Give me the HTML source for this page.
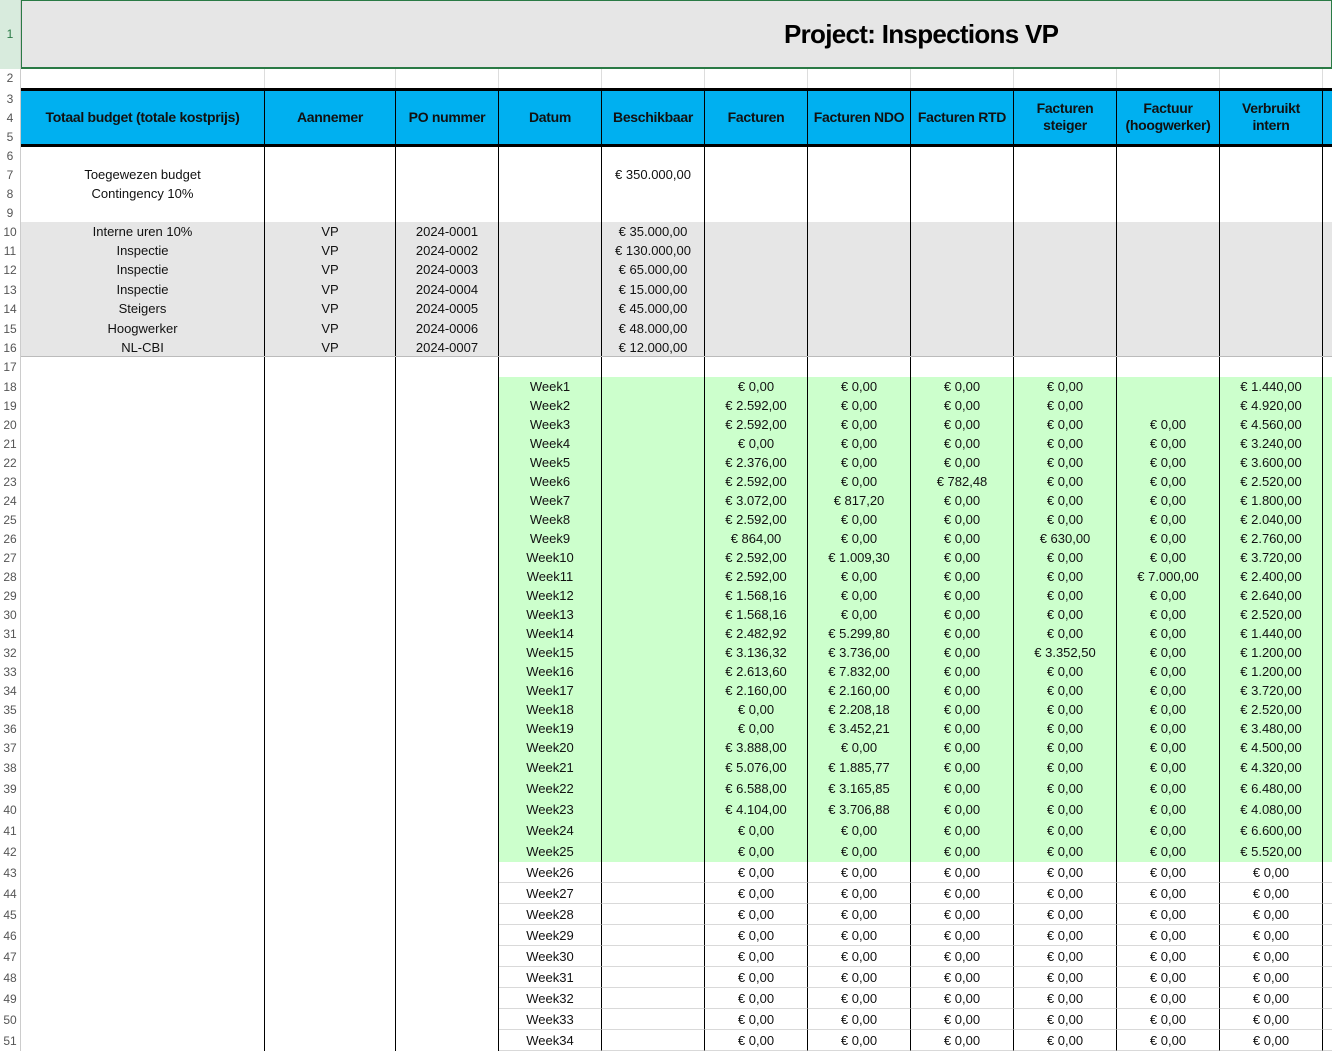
<!DOCTYPE html>
<html><head><meta charset="utf-8"><style>
*{margin:0;padding:0;box-sizing:border-box}
body{width:1332px;height:1051px;overflow:hidden;background:#fff;font-family:"Liberation Sans",Arial,sans-serif;color:#111;position:relative}
#rn{position:absolute;left:0;top:0;width:21px;height:1051px;border-right:1px solid #ccc;background:#fff}
#rn div{position:absolute;left:0;width:20px;text-align:center;font-size:12px;color:#555}
#main{position:absolute;left:21px;top:0;width:1311px}
.r{display:flex;height:19px}
.c{border-right:1px solid #000;text-align:center;font-size:13px;line-height:19px;white-space:nowrap;overflow:hidden;flex:none}
.c:nth-child(1){width:244px}.c:nth-child(2){width:131px}
.c:nth-child(n+3){width:103px}.c:nth-child(12){width:9px;border-right:none}
.g .c:nth-child(n+4){background:#ccffcc}
.w .c:nth-child(n+4){border-bottom:1px solid #d9d9d9}
.gr .c{background:#e6e6e6}
.h21{height:21px}.h21 .c{line-height:21px}
.hd .c{font-weight:bold;font-size:14px;letter-spacing:-0.3px}
</style></head><body>
<div id="rn">
<div style="top:0;height:69px;line-height:69px;background:#d8ebdd;color:#2a7a45">1</div>
<div style="top:69px;line-height:19px">2</div>
<div style="top:90px;line-height:19px">3</div>
<div style="top:109px;line-height:19px">4</div>
<div style="top:128px;line-height:19px">5</div>
<div style="top:147px;line-height:19px">6</div>
<div style="top:166px;line-height:19px">7</div>
<div style="top:185px;line-height:19px">8</div>
<div style="top:204px;line-height:19px">9</div>
<div style="top:223px;line-height:19px">10</div>
<div style="top:242px;line-height:19px">11</div>
<div style="top:261px;line-height:19px">12</div>
<div style="top:281px;line-height:19px">13</div>
<div style="top:300px;line-height:19px">14</div>
<div style="top:320px;line-height:19px">15</div>
<div style="top:339px;line-height:19px">16</div>
<div style="top:358px;line-height:19px">17</div>
<div style="top:378px;line-height:19px">18</div><div style="top:397px;line-height:19px">19</div><div style="top:416px;line-height:19px">20</div><div style="top:435px;line-height:19px">21</div><div style="top:454px;line-height:19px">22</div><div style="top:473px;line-height:19px">23</div><div style="top:492px;line-height:19px">24</div><div style="top:511px;line-height:19px">25</div><div style="top:530px;line-height:19px">26</div><div style="top:549px;line-height:19px">27</div><div style="top:568px;line-height:19px">28</div><div style="top:587px;line-height:19px">29</div><div style="top:606px;line-height:19px">30</div><div style="top:625px;line-height:19px">31</div><div style="top:644px;line-height:19px">32</div><div style="top:663px;line-height:19px">33</div><div style="top:682px;line-height:19px">34</div><div style="top:701px;line-height:19px">35</div><div style="top:720px;line-height:19px">36</div><div style="top:739px;line-height:19px">37</div>
<div style="top:758px;line-height:21px">38</div><div style="top:779px;line-height:21px">39</div><div style="top:800px;line-height:21px">40</div><div style="top:821px;line-height:21px">41</div><div style="top:842px;line-height:21px">42</div><div style="top:863px;line-height:21px">43</div><div style="top:884px;line-height:21px">44</div><div style="top:905px;line-height:21px">45</div><div style="top:926px;line-height:21px">46</div><div style="top:947px;line-height:21px">47</div><div style="top:968px;line-height:21px">48</div><div style="top:989px;line-height:21px">49</div><div style="top:1010px;line-height:21px">50</div><div style="top:1031px;line-height:21px">51</div>
</div>
<div id="main">
<div style="height:69px;background:#e6e6e6;border:1px solid #2a7a45;border-bottom:2px solid #2a7a45;position:relative">
<div style="position:absolute;left:762px;top:18px;font-size:26px;font-weight:bold;color:#000;letter-spacing:-0.7px">Project: Inspections VP</div></div>
<div class="r" style="height:19px"><div class="c" style="border-color:#ddd"></div><div class="c" style="border-color:#ddd"></div><div class="c" style="border-color:#ddd"></div><div class="c" style="border-color:#ddd"></div><div class="c" style="border-color:#ddd"></div><div class="c" style="border-color:#ddd"></div><div class="c" style="border-color:#ddd"></div><div class="c" style="border-color:#ddd"></div><div class="c" style="border-color:#ddd"></div><div class="c" style="border-color:#ddd"></div><div class="c" style="border-color:#ddd"></div><div class="c"></div></div>
<div class="r hd" style="height:59px;background:#00b0f0;border-top:3px solid #000;border-bottom:3px solid #000">
<div class="c" style="line-height:53px">Totaal budget (totale kostprijs)</div>
<div class="c" style="line-height:53px">Aannemer</div>
<div class="c" style="line-height:53px">PO nummer</div>
<div class="c" style="line-height:53px">Datum</div>
<div class="c" style="line-height:53px">Beschikbaar</div>
<div class="c" style="line-height:53px">Facturen</div>
<div class="c" style="line-height:53px">Facturen NDO</div>
<div class="c" style="line-height:53px">Facturen RTD</div>
<div class="c" style="line-height:17px;padding-top:9px">Facturen<br>steiger</div>
<div class="c" style="line-height:17px;padding-top:9px">Factuur<br>(hoogwerker)</div>
<div class="c" style="line-height:17px;padding-top:9px">Verbruikt<br>intern</div>
<div class="c"></div></div>
<div class="r" style="height:75px">
<div class="c" style="line-height:19px;padding-top:18px">Toegewezen budget<br>Contingency 10%</div>
<div class="c"></div><div class="c"></div><div class="c"></div>
<div class="c" style="padding-top:18px">€ 350.000,00</div>
<div class="c"></div><div class="c"></div><div class="c"></div><div class="c"></div><div class="c"></div><div class="c"></div><div class="c"></div></div>
<div class="r gr"><div class="c">Interne uren 10%</div><div class="c">VP</div><div class="c">2024-0001</div><div class="c"></div><div class="c">€ 35.000,00</div><div class="c"></div><div class="c"></div><div class="c"></div><div class="c"></div><div class="c"></div><div class="c"></div><div class="c"></div></div>
<div class="r gr"><div class="c">Inspectie</div><div class="c">VP</div><div class="c">2024-0002</div><div class="c"></div><div class="c">€ 130.000,00</div><div class="c"></div><div class="c"></div><div class="c"></div><div class="c"></div><div class="c"></div><div class="c"></div><div class="c"></div></div>
<div class="r gr" style="height:20px"><div class="c">Inspectie</div><div class="c">VP</div><div class="c">2024-0003</div><div class="c"></div><div class="c">€ 65.000,00</div><div class="c"></div><div class="c"></div><div class="c"></div><div class="c"></div><div class="c"></div><div class="c"></div><div class="c"></div></div>
<div class="r gr"><div class="c">Inspectie</div><div class="c">VP</div><div class="c">2024-0004</div><div class="c"></div><div class="c">€ 15.000,00</div><div class="c"></div><div class="c"></div><div class="c"></div><div class="c"></div><div class="c"></div><div class="c"></div><div class="c"></div></div>
<div class="r gr" style="height:20px"><div class="c">Steigers</div><div class="c">VP</div><div class="c">2024-0005</div><div class="c"></div><div class="c">€ 45.000,00</div><div class="c"></div><div class="c"></div><div class="c"></div><div class="c"></div><div class="c"></div><div class="c"></div><div class="c"></div></div>
<div class="r gr"><div class="c">Hoogwerker</div><div class="c">VP</div><div class="c">2024-0006</div><div class="c"></div><div class="c">€ 48.000,00</div><div class="c"></div><div class="c"></div><div class="c"></div><div class="c"></div><div class="c"></div><div class="c"></div><div class="c"></div></div>
<div class="r gr" style="border-bottom:1px solid #bbb"><div class="c">NL-CBI</div><div class="c">VP</div><div class="c">2024-0007</div><div class="c"></div><div class="c">€ 12.000,00</div><div class="c"></div><div class="c"></div><div class="c"></div><div class="c"></div><div class="c"></div><div class="c"></div><div class="c"></div></div>
<div class="r" style="height:20px"><div class="c"></div><div class="c"></div><div class="c"></div><div class="c"></div><div class="c"></div><div class="c"></div><div class="c"></div><div class="c"></div><div class="c"></div><div class="c"></div><div class="c"></div><div class="c"></div></div>
<div class="r g"><div class="c"></div><div class="c"></div><div class="c"></div><div class="c">Week1</div><div class="c"></div><div class="c">€ 0,00</div><div class="c">€ 0,00</div><div class="c">€ 0,00</div><div class="c">€ 0,00</div><div class="c"></div><div class="c">€ 1.440,00</div><div class="c"></div></div>
<div class="r g"><div class="c"></div><div class="c"></div><div class="c"></div><div class="c">Week2</div><div class="c"></div><div class="c">€ 2.592,00</div><div class="c">€ 0,00</div><div class="c">€ 0,00</div><div class="c">€ 0,00</div><div class="c"></div><div class="c">€ 4.920,00</div><div class="c"></div></div>
<div class="r g"><div class="c"></div><div class="c"></div><div class="c"></div><div class="c">Week3</div><div class="c"></div><div class="c">€ 2.592,00</div><div class="c">€ 0,00</div><div class="c">€ 0,00</div><div class="c">€ 0,00</div><div class="c">€ 0,00</div><div class="c">€ 4.560,00</div><div class="c"></div></div>
<div class="r g"><div class="c"></div><div class="c"></div><div class="c"></div><div class="c">Week4</div><div class="c"></div><div class="c">€ 0,00</div><div class="c">€ 0,00</div><div class="c">€ 0,00</div><div class="c">€ 0,00</div><div class="c">€ 0,00</div><div class="c">€ 3.240,00</div><div class="c"></div></div>
<div class="r g"><div class="c"></div><div class="c"></div><div class="c"></div><div class="c">Week5</div><div class="c"></div><div class="c">€ 2.376,00</div><div class="c">€ 0,00</div><div class="c">€ 0,00</div><div class="c">€ 0,00</div><div class="c">€ 0,00</div><div class="c">€ 3.600,00</div><div class="c"></div></div>
<div class="r g"><div class="c"></div><div class="c"></div><div class="c"></div><div class="c">Week6</div><div class="c"></div><div class="c">€ 2.592,00</div><div class="c">€ 0,00</div><div class="c">€ 782,48</div><div class="c">€ 0,00</div><div class="c">€ 0,00</div><div class="c">€ 2.520,00</div><div class="c"></div></div>
<div class="r g"><div class="c"></div><div class="c"></div><div class="c"></div><div class="c">Week7</div><div class="c"></div><div class="c">€ 3.072,00</div><div class="c">€ 817,20</div><div class="c">€ 0,00</div><div class="c">€ 0,00</div><div class="c">€ 0,00</div><div class="c">€ 1.800,00</div><div class="c"></div></div>
<div class="r g"><div class="c"></div><div class="c"></div><div class="c"></div><div class="c">Week8</div><div class="c"></div><div class="c">€ 2.592,00</div><div class="c">€ 0,00</div><div class="c">€ 0,00</div><div class="c">€ 0,00</div><div class="c">€ 0,00</div><div class="c">€ 2.040,00</div><div class="c"></div></div>
<div class="r g"><div class="c"></div><div class="c"></div><div class="c"></div><div class="c">Week9</div><div class="c"></div><div class="c">€ 864,00</div><div class="c">€ 0,00</div><div class="c">€ 0,00</div><div class="c">€ 630,00</div><div class="c">€ 0,00</div><div class="c">€ 2.760,00</div><div class="c"></div></div>
<div class="r g"><div class="c"></div><div class="c"></div><div class="c"></div><div class="c">Week10</div><div class="c"></div><div class="c">€ 2.592,00</div><div class="c">€ 1.009,30</div><div class="c">€ 0,00</div><div class="c">€ 0,00</div><div class="c">€ 0,00</div><div class="c">€ 3.720,00</div><div class="c"></div></div>
<div class="r g"><div class="c"></div><div class="c"></div><div class="c"></div><div class="c">Week11</div><div class="c"></div><div class="c">€ 2.592,00</div><div class="c">€ 0,00</div><div class="c">€ 0,00</div><div class="c">€ 0,00</div><div class="c">€ 7.000,00</div><div class="c">€ 2.400,00</div><div class="c"></div></div>
<div class="r g"><div class="c"></div><div class="c"></div><div class="c"></div><div class="c">Week12</div><div class="c"></div><div class="c">€ 1.568,16</div><div class="c">€ 0,00</div><div class="c">€ 0,00</div><div class="c">€ 0,00</div><div class="c">€ 0,00</div><div class="c">€ 2.640,00</div><div class="c"></div></div>
<div class="r g"><div class="c"></div><div class="c"></div><div class="c"></div><div class="c">Week13</div><div class="c"></div><div class="c">€ 1.568,16</div><div class="c">€ 0,00</div><div class="c">€ 0,00</div><div class="c">€ 0,00</div><div class="c">€ 0,00</div><div class="c">€ 2.520,00</div><div class="c"></div></div>
<div class="r g"><div class="c"></div><div class="c"></div><div class="c"></div><div class="c">Week14</div><div class="c"></div><div class="c">€ 2.482,92</div><div class="c">€ 5.299,80</div><div class="c">€ 0,00</div><div class="c">€ 0,00</div><div class="c">€ 0,00</div><div class="c">€ 1.440,00</div><div class="c"></div></div>
<div class="r g"><div class="c"></div><div class="c"></div><div class="c"></div><div class="c">Week15</div><div class="c"></div><div class="c">€ 3.136,32</div><div class="c">€ 3.736,00</div><div class="c">€ 0,00</div><div class="c">€ 3.352,50</div><div class="c">€ 0,00</div><div class="c">€ 1.200,00</div><div class="c"></div></div>
<div class="r g"><div class="c"></div><div class="c"></div><div class="c"></div><div class="c">Week16</div><div class="c"></div><div class="c">€ 2.613,60</div><div class="c">€ 7.832,00</div><div class="c">€ 0,00</div><div class="c">€ 0,00</div><div class="c">€ 0,00</div><div class="c">€ 1.200,00</div><div class="c"></div></div>
<div class="r g"><div class="c"></div><div class="c"></div><div class="c"></div><div class="c">Week17</div><div class="c"></div><div class="c">€ 2.160,00</div><div class="c">€ 2.160,00</div><div class="c">€ 0,00</div><div class="c">€ 0,00</div><div class="c">€ 0,00</div><div class="c">€ 3.720,00</div><div class="c"></div></div>
<div class="r g"><div class="c"></div><div class="c"></div><div class="c"></div><div class="c">Week18</div><div class="c"></div><div class="c">€ 0,00</div><div class="c">€ 2.208,18</div><div class="c">€ 0,00</div><div class="c">€ 0,00</div><div class="c">€ 0,00</div><div class="c">€ 2.520,00</div><div class="c"></div></div>
<div class="r g"><div class="c"></div><div class="c"></div><div class="c"></div><div class="c">Week19</div><div class="c"></div><div class="c">€ 0,00</div><div class="c">€ 3.452,21</div><div class="c">€ 0,00</div><div class="c">€ 0,00</div><div class="c">€ 0,00</div><div class="c">€ 3.480,00</div><div class="c"></div></div>
<div class="r g"><div class="c"></div><div class="c"></div><div class="c"></div><div class="c">Week20</div><div class="c"></div><div class="c">€ 3.888,00</div><div class="c">€ 0,00</div><div class="c">€ 0,00</div><div class="c">€ 0,00</div><div class="c">€ 0,00</div><div class="c">€ 4.500,00</div><div class="c"></div></div>
<div class="r g h21"><div class="c"></div><div class="c"></div><div class="c"></div><div class="c">Week21</div><div class="c"></div><div class="c">€ 5.076,00</div><div class="c">€ 1.885,77</div><div class="c">€ 0,00</div><div class="c">€ 0,00</div><div class="c">€ 0,00</div><div class="c">€ 4.320,00</div><div class="c"></div></div>
<div class="r g h21"><div class="c"></div><div class="c"></div><div class="c"></div><div class="c">Week22</div><div class="c"></div><div class="c">€ 6.588,00</div><div class="c">€ 3.165,85</div><div class="c">€ 0,00</div><div class="c">€ 0,00</div><div class="c">€ 0,00</div><div class="c">€ 6.480,00</div><div class="c"></div></div>
<div class="r g h21"><div class="c"></div><div class="c"></div><div class="c"></div><div class="c">Week23</div><div class="c"></div><div class="c">€ 4.104,00</div><div class="c">€ 3.706,88</div><div class="c">€ 0,00</div><div class="c">€ 0,00</div><div class="c">€ 0,00</div><div class="c">€ 4.080,00</div><div class="c"></div></div>
<div class="r g h21"><div class="c"></div><div class="c"></div><div class="c"></div><div class="c">Week24</div><div class="c"></div><div class="c">€ 0,00</div><div class="c">€ 0,00</div><div class="c">€ 0,00</div><div class="c">€ 0,00</div><div class="c">€ 0,00</div><div class="c">€ 6.600,00</div><div class="c"></div></div>
<div class="r g h21"><div class="c"></div><div class="c"></div><div class="c"></div><div class="c">Week25</div><div class="c"></div><div class="c">€ 0,00</div><div class="c">€ 0,00</div><div class="c">€ 0,00</div><div class="c">€ 0,00</div><div class="c">€ 0,00</div><div class="c">€ 5.520,00</div><div class="c"></div></div>
<div class="r w h21"><div class="c"></div><div class="c"></div><div class="c"></div><div class="c">Week26</div><div class="c"></div><div class="c">€ 0,00</div><div class="c">€ 0,00</div><div class="c">€ 0,00</div><div class="c">€ 0,00</div><div class="c">€ 0,00</div><div class="c">€ 0,00</div><div class="c"></div></div>
<div class="r w h21"><div class="c"></div><div class="c"></div><div class="c"></div><div class="c">Week27</div><div class="c"></div><div class="c">€ 0,00</div><div class="c">€ 0,00</div><div class="c">€ 0,00</div><div class="c">€ 0,00</div><div class="c">€ 0,00</div><div class="c">€ 0,00</div><div class="c"></div></div>
<div class="r w h21"><div class="c"></div><div class="c"></div><div class="c"></div><div class="c">Week28</div><div class="c"></div><div class="c">€ 0,00</div><div class="c">€ 0,00</div><div class="c">€ 0,00</div><div class="c">€ 0,00</div><div class="c">€ 0,00</div><div class="c">€ 0,00</div><div class="c"></div></div>
<div class="r w h21"><div class="c"></div><div class="c"></div><div class="c"></div><div class="c">Week29</div><div class="c"></div><div class="c">€ 0,00</div><div class="c">€ 0,00</div><div class="c">€ 0,00</div><div class="c">€ 0,00</div><div class="c">€ 0,00</div><div class="c">€ 0,00</div><div class="c"></div></div>
<div class="r w h21"><div class="c"></div><div class="c"></div><div class="c"></div><div class="c">Week30</div><div class="c"></div><div class="c">€ 0,00</div><div class="c">€ 0,00</div><div class="c">€ 0,00</div><div class="c">€ 0,00</div><div class="c">€ 0,00</div><div class="c">€ 0,00</div><div class="c"></div></div>
<div class="r w h21"><div class="c"></div><div class="c"></div><div class="c"></div><div class="c">Week31</div><div class="c"></div><div class="c">€ 0,00</div><div class="c">€ 0,00</div><div class="c">€ 0,00</div><div class="c">€ 0,00</div><div class="c">€ 0,00</div><div class="c">€ 0,00</div><div class="c"></div></div>
<div class="r w h21"><div class="c"></div><div class="c"></div><div class="c"></div><div class="c">Week32</div><div class="c"></div><div class="c">€ 0,00</div><div class="c">€ 0,00</div><div class="c">€ 0,00</div><div class="c">€ 0,00</div><div class="c">€ 0,00</div><div class="c">€ 0,00</div><div class="c"></div></div>
<div class="r w h21"><div class="c"></div><div class="c"></div><div class="c"></div><div class="c">Week33</div><div class="c"></div><div class="c">€ 0,00</div><div class="c">€ 0,00</div><div class="c">€ 0,00</div><div class="c">€ 0,00</div><div class="c">€ 0,00</div><div class="c">€ 0,00</div><div class="c"></div></div>
<div class="r w h21"><div class="c"></div><div class="c"></div><div class="c"></div><div class="c">Week34</div><div class="c"></div><div class="c">€ 0,00</div><div class="c">€ 0,00</div><div class="c">€ 0,00</div><div class="c">€ 0,00</div><div class="c">€ 0,00</div><div class="c">€ 0,00</div><div class="c"></div></div>
</div>
</body></html>
